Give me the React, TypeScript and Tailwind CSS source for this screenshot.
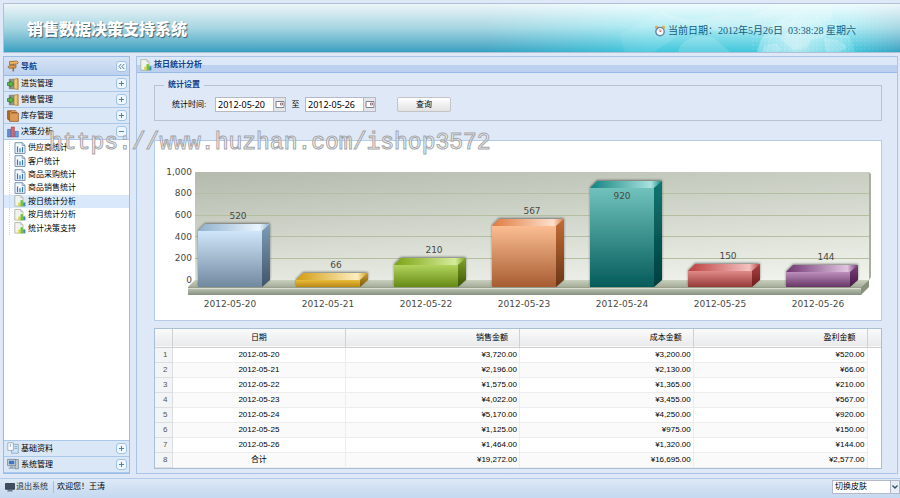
import type { ReactNode } from 'react';

type IconName = 'signpost' | 'door' | 'box' | 'bars' | 'doc' | 'report' | 'docs' | 'computer';

const menuItems: { label: string; icon: IconName; open?: boolean }[] = [
  { label: '进货管理', icon: 'door' },
  { label: '销售管理', icon: 'door' },
  { label: '库存管理', icon: 'box' },
  { label: '决策分析', icon: 'bars', open: true },
];

const treeItems: { label: string; icon: IconName; active?: boolean }[] = [
  { label: '供应商统计', icon: 'doc' },
  { label: '客户统计', icon: 'doc' },
  { label: '商品采购统计', icon: 'doc' },
  { label: '商品销售统计', icon: 'doc' },
  { label: '按日统计分析', icon: 'report', active: true },
  { label: '按月统计分析', icon: 'report' },
  { label: '统计决策支持', icon: 'report' },
];

const bottomItems: { label: string; icon: IconName }[] = [
  { label: '基础资料', icon: 'docs' },
  { label: '系统管理', icon: 'computer' },
];

// front / top / side are the gradient stops of the three visible faces
const bars = [
  { day: '2012-05-20', value: 520, top: 90, front: ['#cfe6fa', '#71899f'], cap: ['#8fb0cc', '#eaf5ff'], side: ['#7f9db8', '#3f5468'] },
  { day: '2012-05-21', value: 66, top: 139, front: ['#e9bc3c', '#b98812'], cap: ['#d29c10', '#fdeec0'], side: ['#c99a2a', '#7c5a0c'] },
  { day: '2012-05-22', value: 210, top: 124, front: ['#b2d45c', '#668a17'], cap: ['#7aa312', '#d6ec9c'], side: ['#7ea42a', '#3c5506'] },
  { day: '2012-05-23', value: 567, top: 85, front: ['#fcbd92', '#a75c31'], cap: ['#df7b40', '#fde0cc'], side: ['#c46c36', '#6a3517'] },
  { day: '2012-05-24', value: 920, top: 47, front: ['#70c2bd', '#045c5a'], cap: ['#128380', '#a9e3df'], side: ['#0a7672', '#033f3e'], inside: true },
  { day: '2012-05-25', value: 150, top: 130, front: ['#e08a88', '#963a3a'], cap: ['#bd3f3f', '#f2c2c0'], side: ['#b04040', '#6c1c1e'] },
  { day: '2012-05-26', value: 144, top: 131, front: ['#bd8fbd', '#663665'], cap: ['#713672', '#e0c4e0'], side: ['#7c3f7c', '#451a46'] },
];

const axis = [
  { label: '1,000', y: 31 },
  { label: '800', y: 52 },
  { label: '600', y: 74 },
  { label: '400', y: 96 },
  { label: '200', y: 117 },
  { label: '0', y: 139 },
];

const rows = [
  ['2012-05-20', '¥3,720.00', '¥3,200.00', '¥520.00'],
  ['2012-05-21', '¥2,196.00', '¥2,130.00', '¥66.00'],
  ['2012-05-22', '¥1,575.00', '¥1,365.00', '¥210.00'],
  ['2012-05-23', '¥4,022.00', '¥3,455.00', '¥567.00'],
  ['2012-05-24', '¥5,170.00', '¥4,250.00', '¥920.00'],
  ['2012-05-25', '¥1,125.00', '¥975.00', '¥150.00'],
  ['2012-05-26', '¥1,464.00', '¥1,320.00', '¥144.00'],
  ['合计', '¥19,272.00', '¥16,695.00', '¥2,577.00'],
];

function Icon({ name }: { name: IconName }) {
  const shapes: Record<IconName, ReactNode> = {
    signpost: (
      <>
        <path d="M5.5 1h1.6v10.4H5.5z" fill="#a8692a" />
        <path d="M2.5 1.6 10 1l1.4 1.4L10.2 4l-7.7.5z" fill="#eeb565" stroke="#8d5a22" strokeWidth=".7" />
        <path d="M9 5 2.4 5.4.8 7l1.6 1.3L9 7.8z" fill="#dd9a48" stroke="#8d5a22" strokeWidth=".7" />
      </>
    ),
    door: (
      <>
        <path d="M2.2 1.2h5v9.6h-5z" fill="#8d9894" stroke="#66706c" strokeWidth=".6" />
        <path d="M7 1.2 11.2.5v11L7 10.8z" fill="#f0c878" stroke="#a87a36" strokeWidth=".7" />
        <path d="M10.4 1v10" stroke="#c9913e" strokeWidth=".8" />
        <path d="M.5 4.6h2.6V2.8L6.8 6 3.1 9.2V7.4H.5z" fill="#5cbb4a" stroke="#27702a" strokeWidth=".7" />
      </>
    ),
    box: (
      <>
        <path d="M.6.8h8l.9 1.2v8H1.5L.6 9z" fill="#b36c28" stroke="#7b4415" strokeWidth=".7" />
        <path d="M2.6 3h8.8v8.4H2.6z" fill="#dc9c58" stroke="#8c5220" strokeWidth=".7" />
        <path d="M2.8 3.2 5 1.4h5" fill="none" stroke="#eec08a" strokeWidth=".7" />
      </>
    ),
    bars: (
      <>
        <path d="M.6 3.4h3.2V11H.6z" fill="#5a92dc" stroke="#28559c" strokeWidth=".5" />
        <path d="M4.2 1h3.2v10H4.2z" fill="#e0656a" stroke="#a12a32" strokeWidth=".5" />
        <path d="M8 5.4h3.3V11H8z" fill="#63a7e6" stroke="#28559c" strokeWidth=".5" />
      </>
    ),
    doc: (
      <>
        <path d="M1 .7h7.2L11 3.4v8H1z" fill="#f2f8fe" stroke="#6688aa" strokeWidth=".9" />
        <path d="M8.2.7v2.7H11" fill="none" stroke="#6688aa" strokeWidth=".7" />
        <path d="M3.5 4.4v5.8M6 6.2v4M8.5 5v5.2" stroke="#3878b8" strokeWidth="1.2" />
      </>
    ),
    report: (
      <>
        <path d="M.8.6h6L9 2.8v8.3H.8z" fill="#f0f3ee" stroke="#a8aea6" strokeWidth=".8" />
        <path d="M6.8.6v2.2H9" fill="none" stroke="#a8aea6" strokeWidth=".6" />
        <path d="M4.2 7.6h2.2v3.8H4.2z" fill="#e8d23e" />
        <path d="M6.5 5.2h2.4v6.2H6.5z" fill="#6fc234" />
        <path d="M9.2 7.4h2.2v4H9.2z" fill="#3f86c8" />
      </>
    ),
    docs: (
      <>
        <path d="M4.5 2.4h6.8v8.8H4.5z" fill="#cfe4f6" stroke="#7a9cb8" strokeWidth=".7" />
        <path d="M.8.8h5.6v7.6H.8z" fill="#fafcfe" stroke="#8a9aa8" strokeWidth=".7" />
        <path d="M3.4 2.2v2.6M7.6 4.6h2.6M7.6 6.4h2.6" stroke="#7a9cb8" strokeWidth=".8" />
      </>
    ),
    computer: (
      <>
        <path d="M8 1.6h3.4v9.2H8z" fill="#c6ccd4" stroke="#707a88" strokeWidth=".7" />
        <path d="M.6 1.4h8v6.2h-8z" fill="#dfe4ea" stroke="#66707e" strokeWidth=".7" />
        <path d="M1.8 2.6h5.6v3.8H1.8z" fill="#3f74bc" />
        <path d="M3 8.2h3.4v1.2H8v1.4H1.6V9.4H3z" fill="#98a2b0" />
      </>
    ),
  };
  return (
    <svg viewBox="0 0 12 12" className="size-3 shrink-0" aria-hidden="true">
      {shapes[name]}
    </svg>
  );
}

function Tool({ label, path }: { label: string; path: string }) {
  return (
    <button
      aria-label={label}
      className="flex size-[11px] shrink-0 items-center justify-center rounded-[3px] border border-[#a3c3e4] bg-[#eef6fe]"
    >
      <svg viewBox="0 0 9 9" className="size-[9px]" fill="none" stroke="#5580ae" strokeWidth="1">
        <path d={path} />
      </svg>
    </button>
  );
}

function MenuRow({ label, icon, open }: { label: string; icon: IconName; open?: boolean }) {
  return (
    <div className="flex h-4 items-center border-b border-[#a9c8ea] bg-[#dae7f6] pr-[2px] pl-[3px]">
      <Icon name={icon} />
      <span className="ml-[2px] flex-1 pt-px">{label}</span>
      <Tool label={label} path={open ? 'M2 4.5h5' : 'M2 4.5h5M4.5 2v5'} />
    </div>
  );
}

function HeaderArt() {
  return (
    <svg
      viewBox="0 0 420 48"
      preserveAspectRatio="xMaxYMid slice"
      className="absolute inset-y-0 right-0 h-full w-[420px]"
      aria-hidden="true"
    >
      <defs>
        <linearGradient id="sky" x1="0" y1="0" x2="0" y2="1">
          <stop offset="0" stopColor="#eefbfd" />
          <stop offset=".45" stopColor="#b4edf4" />
          <stop offset="1" stopColor="#41c6dc" />
        </linearGradient>
        <linearGradient id="fade" x1="0" y1="0" x2="1" y2="0">
          <stop offset="0" stopColor="#fff" stopOpacity="0" />
          <stop offset=".4" stopColor="#fff" />
          <stop offset=".88" stopColor="#fff" />
          <stop offset="1" stopColor="#fff" stopOpacity=".1" />
        </linearGradient>
        <radialGradient id="globe" cx=".4" cy=".35" r=".65">
          <stop offset="0" stopColor="#fff" stopOpacity=".6" />
          <stop offset=".8" stopColor="#c8f6fa" stopOpacity=".25" />
          <stop offset="1" stopColor="#c8f6fa" stopOpacity=".1" />
        </radialGradient>
        <pattern id="dots" width="4" height="4" patternUnits="userSpaceOnUse">
          <circle cx="1" cy="1" r=".7" fill="#fff" fillOpacity=".4" />
        </pattern>
        <mask id="fadeMask">
          <rect width="420" height="48" fill="url(#fade)" />
        </mask>
      </defs>
      <g mask="url(#fadeMask)">
        <rect width="420" height="48" fill="url(#sky)" />
        <path d="M140 30 182 7l26 18-34 23h-30z" fill="#fff" fillOpacity=".1" />
        <path d="M178 6q30 16 64 4 26 8 50-8h60v14q-60 14-90 10-50 6-84-20z" fill="#fff" fillOpacity=".2" />
        <path d="M200 42q12-14 34-8l16 14h-52z" fill="#fff" fillOpacity=".15" />
        <circle cx="326" cy="58" r="50" fill="url(#globe)" />
        <path
          d="M300 34l12-8 14 3 9-7 13 4-5 8-12 2-4 8-14 2zM344 34l14 2 9 7-7 5h-14zM284 42l12-3 6 6-4 3h-16z"
          fill="#fff"
          fillOpacity=".2"
        />
        <rect x="270" width="150" height="48" fill="url(#dots)" fillOpacity=".6" />
        <g fill="none" stroke="#fff" strokeOpacity=".25" strokeWidth=".6">
          <ellipse cx="326" cy="58" rx="22" ry="50" />
          <ellipse cx="326" cy="58" rx="40" ry="50" />
          <path d="M282 34q44-10 88 0M290 22q36-8 72 0" />
        </g>
      </g>
    </svg>
  );
}

function Chart() {
  return (
    <svg
      viewBox="0 0 726 179"
      className="block w-full"
      role="img"
      aria-label="按日统计分析"
      fontFamily="'DejaVu Sans', sans-serif"
      fontSize="9"
      fill="#474a45"
    >
      <defs>
        <linearGradient id="wall" x1="0" y1="0" x2="1" y2=".9">
          <stop offset="0" stopColor="#b3b9ac" />
          <stop offset=".5" stopColor="#d3d8cd" />
          <stop offset="1" stopColor="#eff2ea" />
        </linearGradient>
        <linearGradient id="wallDown" x1="0" y1="0" x2="0" y2="1">
          <stop offset="0" stopColor="#b5bbae" stopOpacity=".4" />
          <stop offset="1" stopColor="#f3f5ef" stopOpacity=".5" />
        </linearGradient>
        <linearGradient id="floor" x1="0" y1="0" x2="0" y2="1">
          <stop offset="0" stopColor="#c9d0be" />
          <stop offset="1" stopColor="#a5ad99" />
        </linearGradient>
        <linearGradient id="ledge" x1="0" y1="0" x2="0" y2="1">
          <stop offset="0" stopColor="#c8cebe" />
          <stop offset="1" stopColor="#87907e" />
        </linearGradient>
        <filter id="shadow" x="-20%" y="-40%" width="140%" height="180%">
          <feDropShadow dx="0" dy="-1" stdDeviation="1.3" floodColor="#333" floodOpacity=".6" />
        </filter>
        {bars.map((bar, i) => (
          <g key={bar.day}>
            <linearGradient id={`front${i}`} x1="0" y1="0" x2="0" y2="1">
              <stop offset="0" stopColor={bar.front[0]} />
              <stop offset="1" stopColor={bar.front[1]} />
            </linearGradient>
            <linearGradient id={`cap${i}`} x1="0" y1="0" x2="1" y2="0">
              <stop offset="0" stopColor={bar.cap[0]} />
              <stop offset=".85" stopColor={bar.cap[1]} />
              <stop offset="1" stopColor={bar.cap[0]} />
            </linearGradient>
            <linearGradient id={`side${i}`} x1="0" y1="0" x2="0" y2="1">
              <stop offset="0" stopColor={bar.side[0]} />
              <stop offset="1" stopColor={bar.side[1]} />
            </linearGradient>
          </g>
        ))}
      </defs>

      {/* Back wall */}
      <path d="M714 31l2 2v103l-2 3z" fill="#a9af9f" />
      <rect x="40" y="31" width="674" height="109" fill="url(#wall)" />
      <rect x="40" y="31" width="674" height="109" fill="url(#wallDown)" />
      <path d="M40 52.5h674M40 74.5h674M40 95.5h674M40 117.5h674" stroke="#b3bfa0" />

      {/* Floor */}
      <path d="M40 139h674l-8 7H33z" fill="url(#floor)" />
      <rect x="33" y="146" width="673" height="8" fill="url(#ledge)" />
      <path d="M33 146.5h673" stroke="#8f9884" strokeWidth=".8" />
      <path d="M33 147.5h673" stroke="#e0e4d8" strokeWidth=".8" />
      <path d="M706 146l8-7v7l-8 8z" fill="#8a927e" />

      {axis.map((tick) => (
        <text key={tick.label} x="37" y={tick.y + 3} textAnchor="end">
          {tick.label}
        </text>
      ))}

      {bars.map((bar, i) => {
        const x = 43 + 98 * i;
        const h = 146 - bar.top;
        return (
          <g key={bar.day}>
            <g filter="url(#shadow)">
              <path d={`M${x} ${bar.top}l7-7h65l-8 7z`} fill={`url(#cap${i})`} />
              <path d={`M${x + 64} ${bar.top}l8-7v${h}l-8 7z`} fill={`url(#side${i})`} />
              <rect x={x} y={bar.top} width="64" height={h} fill={`url(#front${i})`} />
            </g>
            <text x={bar.inside ? x + 32 : x + 40} y={bar.inside ? bar.top + 11 : bar.top - 12} textAnchor="middle">
              {bar.value}
            </text>
            <text x={x + 32} y="166" textAnchor="middle">
              {bar.day}
            </text>
          </g>
        );
      })}
    </svg>
  );
}

function DateField({ id, label, value }: { id: string; label: string; value: string }) {
  return (
    <div className="flex h-[15px] w-[71px]">
      <input
        id={id}
        aria-label={label}
        defaultValue={value}
        className="w-[59px] border border-[#b5b8c8] bg-white px-[2px] font-['Noto_Sans',sans-serif] text-[9px] leading-3 text-black"
      />
      <button
        aria-label="选择日期"
        className="flex flex-1 items-center justify-center border border-l-0 border-[#b5b8c8] bg-[#e4e6ea]"
      >
        <svg viewBox="0 0 10 10" className="size-[10px]" fill="none" stroke="#7d8490">
          <path d="M1 1.5h8v6H1z" fill="#fff" />
          <path d="M5.5 3h2v2h-2z" strokeWidth=".8" stroke="#8c5a68" />
        </svg>
      </button>
    </div>
  );
}

export default function App() {
  return (
    <div className="relative flex min-h-screen flex-col bg-[#dfe8f6] pt-[3px] font-['Liberation_Sans','Noto_Sans_CJK_SC',sans-serif] text-[8px] leading-[10px] text-black">
      {/* Banner */}
      <header className="relative ml-[3px] flex h-[50px] items-center overflow-hidden border-y border-l border-[#b0c0d6] bg-linear-to-b from-[#edf5f8] via-[#a6d6e2] to-[#35a0c0] pr-11 pl-[23px]">
        <HeaderArt />
        <h1 className="relative flex-1 font-['Noto_Sans_CJK_SC',sans-serif] text-[16px] leading-6 font-black text-white [text-shadow:1px_1px_1px_#44626e]">
          销售数据决策支持系统
        </h1>
        <p className="relative flex items-center gap-[2px] pt-[5px] font-['Liberation_Serif','Noto_Sans_CJK_SC',serif] text-[10px] leading-3 text-[#155c7e]">
          <svg viewBox="0 0 12 12" className="size-3" aria-hidden="true">
            <circle cx="2.6" cy="2.4" r="1.8" fill="#e8b252" />
            <circle cx="9.4" cy="2.4" r="1.8" fill="#e8b252" />
            <circle cx="6" cy="6.6" r="4.2" fill="#f6fafc" stroke="#6288aa" strokeWidth="1.4" />
            <path d="M6 4.4v2.4l1.6-1" fill="none" stroke="#c0483a" strokeWidth=".8" />
          </svg>
          <span className="whitespace-pre">当前日期：2012年5月26日  03:38:28 星期六</span>
        </p>
      </header>

      <div className="mt-[3px] flex flex-1 gap-[6px] pr-[2px] pl-[3px]">
        {/* Navigation */}
        <nav className="flex w-[127px] shrink-0 flex-col border border-[#99bbe8] bg-white">
          <div className="flex h-[19px] items-center border-b border-[#99bbe8] bg-linear-to-b from-[#d6e3f5] to-[#bcd1ee] pr-[2px] pl-[3px]">
            <Icon name="signpost" />
            <h2 className="ml-[2px] flex-1 pt-px font-bold text-[#15428b]">导航</h2>
            <Tool label="收起" path="M4.2 2 2 4.5 4.2 7M7.2 2 5 4.5 7.2 7" />
          </div>
          {menuItems.map((item) => (
            <MenuRow key={item.label} {...item} />
          ))}
          <ul className="flex h-[95px] flex-col pt-px">
            {treeItems.map((item) => (
              <li key={item.label} className={item.active ? 'flex flex-1 bg-[#d9e8fb]' : 'flex flex-1'}>
                <span className="ml-[5px] w-[5px] border-l border-dotted border-[#d4d8de]" />
                <a href="#" className="flex items-center gap-[2px]">
                  <Icon name={item.icon} />
                  <span className="pt-px">{item.label}</span>
                </a>
              </li>
            ))}
          </ul>
          <div className="mt-auto border-t border-[#a9c8ea]">
            {bottomItems.map((item) => (
              <MenuRow key={item.label} {...item} />
            ))}
          </div>
        </nav>

        {/* Statistics panel */}
        <main className="min-w-0 flex-1 border border-[#a9c4e6]">
          <div className="flex h-4 items-center gap-[2px] border-b border-[#99bbe8] bg-linear-to-b from-[#dce8f7] from-50% to-[#bbd1ef] to-55% pl-[3px]">
            <Icon name="report" />
            <h2 className="font-bold text-[#15428b]">按日统计分析</h2>
          </div>

          <div className="pt-[7px] pr-[15px] pb-1 pl-[17px]">
            <form onSubmit={(e) => e.preventDefault()}>
              <fieldset className="border border-[#b9c1d2] pt-[7px] pr-4 pb-2 pl-[17px]">
                <legend className="-ml-2 px-1 font-bold text-[#15428b]">统计设置</legend>
                <div className="flex h-[15px] items-center">
                  <label htmlFor="from" className="w-[43px]">
                    统计时间:
                  </label>
                  <DateField id="from" label="统计时间" value="2012-05-20" />
                  <label htmlFor="to" className="w-[19px] text-center">
                    至
                  </label>
                  <DateField id="to" label="至" value="2012-05-26" />
                  <button
                    type="submit"
                    className="ml-[21px] h-[15px] w-[54px] rounded-[2px] border border-[#c2c4c8] bg-linear-to-b from-white to-[#e2e2e2]"
                  >
                    查询
                  </button>
                </div>
              </fieldset>
            </form>

            <section className="mt-[19px] border border-[#b5cbe6] bg-white">
              <Chart />
            </section>

            <section className="mt-[7px] border border-[#a9bfd8] bg-white">
              <table className="w-full table-fixed border-collapse">
                <colgroup>
                  <col className="w-[17px]" />
                  <col />
                  <col />
                  <col />
                  <col />
                  <col className="w-[14px]" />
                </colgroup>
                <thead>
                  <tr className="h-[18px] border-b border-[#d0d0d0] bg-linear-to-b from-[#fafafa] to-[#e9eaec]">
                    <th className="border-r border-[#d0d0d0]" />
                    <th className="border-r border-[#d0d0d0] font-normal">日期</th>
                    <th className="border-r border-[#d0d0d0] pr-[11px] text-right font-normal">销售金额</th>
                    <th className="border-r border-[#d0d0d0] pr-[11px] text-right font-normal">成本金额</th>
                    <th className="border-r border-[#d0d0d0] pr-[11px] text-right font-normal">盈利金额</th>
                    <th />
                  </tr>
                </thead>
                <tbody>
                  {rows.map((row, i) => (
                    <tr key={row[0]} className="h-[15px]">
                      <td className="border-r border-b border-[#dcdee2] bg-[#f3f4f6] pr-1 text-right text-[#555]">
                        {i + 1}
                      </td>
                      {row.map((cell, col) => (
                        <td
                          key={col}
                          className={
                            (i % 2 ? 'bg-[#fafafa] ' : '') +
                            (col === 0 ? 'text-center' : 'pr-[2px] text-right') +
                            ' border-r border-b border-[#ededed]'
                          }
                        >
                          {cell}
                        </td>
                      ))}
                      <td />
                    </tr>
                  ))}
                </tbody>
              </table>
            </section>
          </div>
        </main>
      </div>

      {/* Status bar */}
      <footer className="mt-1 flex h-[21px] items-center border-t border-[#b3cbe8] bg-linear-to-b from-[#dde9f7] to-[#c3d7ee] pb-[3px] pl-1">
        <button className="flex items-center text-[#333]">
          <svg viewBox="0 0 12 12" className="size-3" aria-hidden="true">
            <path d="M1.5 2.5h9v5.8h-9z" fill="#3f4d5e" stroke="#2c3848" strokeWidth=".8" />
            <path d="M4 9h4l1 1.4H3z" fill="#6c7888" />
          </svg>
          退出系统
        </button>
        <span className="mr-[3px] ml-[5px] h-3 border-l border-[#a8bfdc]" />
        <span className="flex-1">欢迎您！王涛</span>
        <div className="relative h-[14px] w-[68px]">
          <select
            aria-label="切换皮肤"
            className="block size-full appearance-none border border-[#b5b8c8] bg-white pl-[2px] leading-3"
          >
            <option>切换皮肤</option>
          </select>
          <span className="pointer-events-none absolute inset-y-0 right-0 flex w-[10px] items-center justify-center border border-[#b5b8c8] bg-[#e8eef6]">
            <svg viewBox="0 0 8 8" className="size-2" fill="none" stroke="#34506e" strokeWidth="1.4">
              <path d="M1.5 2.5 4 5l2.5-2.5" />
            </svg>
          </span>
        </div>
      </footer>

      {/* Watermark */}
      <div className="pointer-events-none absolute top-[129px] left-[49px] font-['Liberation_Mono',monospace] text-[23px] leading-7 text-white/60 [-webkit-text-stroke:1px_#a4a6aa]">
        https://www.huzhan.com/ishop3572
      </div>
    </div>
  );
}
